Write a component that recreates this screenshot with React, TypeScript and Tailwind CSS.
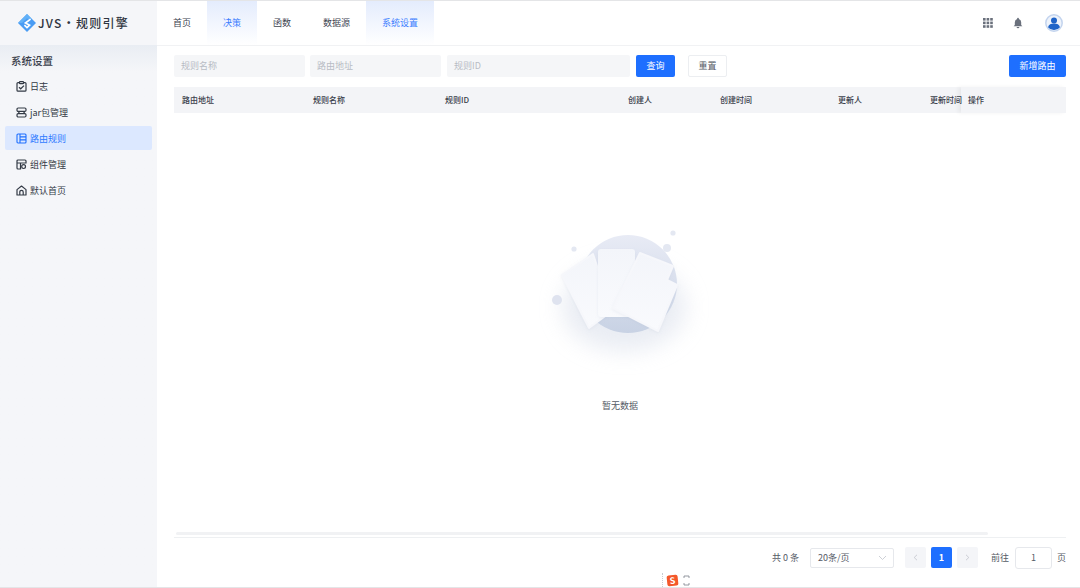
import React from "react";

const font = { fontFamily: '"Noto Sans CJK SC", "Noto Sans", sans-serif' };

const navItems = [
  { label: "首页", active: false },
  { label: "决策", active: true },
  { label: "函数", active: false },
  { label: "数据源", active: false },
  { label: "系统设置", active: true },
];

const LogIcon = () => (
  <svg width="11" height="11" viewBox="0 0 11 11" fill="none" stroke="#333a45" strokeWidth="1.2">
    <path d="M3.5 1.6H2a1 1 0 0 0-1 1v6.6a1 1 0 0 0 1 1h7a1 1 0 0 0 1-1V2.6a1 1 0 0 0-1-1H7.5" />
    <rect x="3.5" y="0.7" width="4" height="2" rx="0.6" />
    <path d="M3 6.2l1.7 1.6L8 4.6" />
  </svg>
);
const JarIcon = () => (
  <svg width="11" height="11" viewBox="0 0 11 11" fill="none" stroke="#333a45" strokeWidth="1.2">
    <rect x="1" y="1" width="9" height="3.4" rx="1.2" />
    <rect x="1" y="6.6" width="9" height="3.4" rx="1.2" />
    <path d="M3.4 4.4l-1 2.2M7.6 4.4l1 2.2" />
  </svg>
);
const RuleIcon = () => (
  <svg width="11" height="11" viewBox="0 0 11 11" fill="none" stroke="#1e6fff" strokeWidth="1.1">
    <rect x="1" y="1" width="9" height="9" rx="1" />
    <path d="M4 1v9M4 3.9h6M4 6.9h6" />
  </svg>
);
const CompIcon = () => (
  <svg width="11" height="11" viewBox="0 0 11 11" fill="none" stroke="#333a45" strokeWidth="1.2">
    <path d="M1 4V2a1 1 0 0 1 1-1h7a1 1 0 0 1 1 1v2H1zM1 4v5a1 1 0 0 0 1 1h2.5V4" />
    <circle cx="7.6" cy="7.6" r="1.9" />
  </svg>
);
const HomeIcon = () => (
  <svg width="11" height="11" viewBox="0 0 11 11" fill="none" stroke="#333a45" strokeWidth="1.2">
    <path d="M1 4.6L5.5 1 10 4.6V10H1V4.6z" strokeLinejoin="round" />
    <path d="M3.8 10V7a1.7 1.7 0 0 1 3.4 0v3" />
  </svg>
);

const menu = [
  { label: "日志", icon: <LogIcon />, active: false },
  { label: "jar包管理", icon: <JarIcon />, active: false },
  { label: "路由规则", icon: <RuleIcon />, active: true },
  { label: "组件管理", icon: <CompIcon />, active: false },
  { label: "默认首页", icon: <HomeIcon />, active: false },
];

const columns = [
  { label: "路由地址", w: "w-[131px]" },
  { label: "规则名称", w: "w-[132px]" },
  { label: "规则ID", w: "w-[183px]" },
  { label: "创建人", w: "w-[92px]" },
  { label: "创建时间", w: "w-[118px]" },
  { label: "更新人", w: "w-[92px]" },
  { label: "更新时间", w: "w-[39px]" },
];

const Logo = () => (
  <svg width="18" height="18" viewBox="0 0 18 18">
    <path d="M9 0L18 9L9 18L0 9Z" fill="#4a9cf4" />
    <path d="M9 0L0 9L4 9L9 4.2L11.5 6.6L13.4 4.4Z" fill="#62b1f8" />
    <path d="M12.6 5.2L7.4 9L11.6 11.2L9 13.6L6.4 11.2" fill="none" stroke="#fff" strokeWidth="1.6" />
  </svg>
);

const Illustration = () => (
  <svg width="140" height="125" viewBox="0 0 140 125" fill="none" className="overflow-visible">
    <defs>
      <linearGradient id="disc" x1="0" y1="0" x2="0" y2="1">
        <stop offset="0" stopColor="#e8ebf5" />
        <stop offset="1" stopColor="#c8d2e4" />
      </linearGradient>
      <linearGradient id="paper" x1="0" y1="0" x2="0" y2="1">
        <stop offset="0" stopColor="#f3f5fa" />
        <stop offset="1" stopColor="#f9fafd" />
      </linearGradient>
      <filter id="soft" x="-50%" y="-50%" width="200%" height="200%">
        <feGaussianBlur stdDeviation="11" />
      </filter>
      <filter id="pageShadow" x="-20%" y="-20%" width="140%" height="140%">
        <feDropShadow dx="0" dy="1" stdDeviation="1.5" floodColor="#aeb8cc" floodOpacity="0.18" />
      </filter>
    </defs>
    <ellipse cx="64" cy="72" rx="62" ry="44" fill="#d8deea" opacity="0.55" filter="url(#soft)" />
    <circle cx="68" cy="49" r="49" fill="url(#disc)" />
    <circle cx="-3" cy="65" r="5" fill="#dfe3ef" />
    <circle cx="14" cy="14" r="2.6" fill="#e4e8f2" />
    <circle cx="107" cy="13" r="4" fill="#e4e8f2" />
    <circle cx="113" cy="-2" r="2.6" fill="#e4e8f2" />
    <path
      d="M2 40L33 19L52 76L29 93Z"
      fill="url(#paper)"
      stroke="#f6f7fb"
      strokeWidth="2"
      strokeLinejoin="round"
      filter="url(#pageShadow)"
    />
    <rect x="38" y="14" width="37" height="68" rx="3" fill="url(#paper)" filter="url(#pageShadow)" />
    <path
      d="M80 18L113 31L107 45L117 50L98 96L53 73Z"
      fill="url(#paper)"
      stroke="#f6f7fb"
      strokeWidth="2"
      strokeLinejoin="round"
      filter="url(#pageShadow)"
    />
  </svg>
);

export default function App() {
  return (
    <div style={font} className="relative flex h-[588px] w-[1080px] flex-col overflow-hidden border-t border-b border-[#e4e5e7] bg-white text-[9px] text-[#333a45]">
      <div className="flex h-[44px] shrink-0">
        <div className="flex w-[157px] shrink-0 items-center bg-[#f5f6f9] pl-[18px]">
          <Logo />
          <span className="ml-[2px] whitespace-nowrap text-[12px] font-medium tracking-[1.25px] text-[#2f3540]">JVS·规则引擎</span>
        </div>
        <nav className="flex">
          {navItems.map((n) => (
            <div
              key={n.label}
              className={
                n.active
                  ? "flex items-center bg-gradient-to-b from-[#e4ecfd] to-white px-4 text-[#3b7dff]"
                  : "flex items-center px-4 text-[#3d4450]"
              }
            >
              {n.label}
            </div>
          ))}
        </nav>
        <div className="ml-auto flex items-center">
          <svg width="10" height="10" viewBox="0 0 10 10" fill="#6a707c" className="mr-[20px]">
            {[0, 3.6, 7.2].flatMap((y) =>
              [0, 3.6, 7.2].map((x) => <rect key={`${x}-${y}`} x={x} y={y} width="2.6" height="2.6" />),
            )}
          </svg>
          <svg width="10" height="12" viewBox="0 0 11 12" fill="#6a707c" className="mr-[22px]">
            <path d="M5.5 0.3a1 1 0 0 1 1 1v.4A3.6 3.6 0 0 1 9 5.2v3l1.3 1.3H.7L2 8.2v-3a3.6 3.6 0 0 1 2.5-3.5v-.4a1 1 0 0 1 1-1z" />
            <path d="M4 10.3h3a1.5 1.5 0 0 1-3 0z" />
          </svg>
          <svg width="18" height="18" viewBox="0 0 18 18" className="mr-[17px]">
            <circle cx="9" cy="9" r="8.2" fill="#eef3fb" stroke="#c3d4ee" strokeWidth="1.5" />
            <circle cx="9" cy="6.4" r="3" fill="#1e63c8" />
            <path d="M3 13.2c.7-2.6 3-3.6 6-3.6s5.3 1 6 3.6A7.4 7.4 0 0 1 9 16a7.4 7.4 0 0 1-6-2.8z" fill="#1e63c8" />
          </svg>
        </div>
      </div>

      <div className="flex min-h-0 flex-1">
        <aside className="w-[157px] shrink-0 bg-gradient-to-b from-[#e9edf3] from-0% via-[#f5f6f9] via-[5%] to-[#f5f6f9]">
          <div className="flex h-[29.4px] items-center pl-[11px] pt-[3px] text-[10.5px] font-medium text-[#3a404b]">系统设置</div>
          <div className="flex flex-col gap-[2px] pl-[5px] pr-[5px]">
            {menu.map((m) => (
              <div
                key={m.label}
                className={
                  m.active
                    ? "flex h-[24px] items-center gap-[3px] rounded-[2px] bg-[#dce8ff] pl-[11px] text-[#2f7bff]"
                    : "flex h-[24px] items-center gap-[3px] pl-[11px] text-[#333a45]"
                }
              >
                {m.icon}
                <span>{m.label}</span>
              </div>
            ))}
          </div>
        </aside>

        <main className="flex min-w-0 flex-1 flex-col border-t border-[#f1f2f4] pl-[17px] pr-[14px]">
          <div className="mt-[9px] flex h-[22px] shrink-0 items-stretch">
            <div className="flex w-[131px] items-center rounded-[2px] bg-[#f5f6f8] pl-[7px] text-[#b8bcc4]">规则名称</div>
            <div className="ml-[5px] flex w-[131px] items-center rounded-[2px] bg-[#f5f6f8] pl-[7px] text-[#b8bcc4]">路由地址</div>
            <div className="ml-[6px] flex w-[183px] items-center rounded-[2px] bg-[#f5f6f8] pl-[7px] text-[#b8bcc4]">规则ID</div>
            <button className="ml-[6px] w-[39px] rounded-[2px] bg-[#1e6fff] text-[9px] text-white">查询</button>
            <button className="ml-[13px] w-[39px] rounded-[2px] border border-[#eceef1] bg-white text-[9px] text-[#555b66]">重置</button>
            <button className="ml-auto w-[57px] rounded-[2px] bg-[#1e6fff] text-[9px] text-white">新增路由</button>
          </div>

          <div className="mt-[10px] flex h-[26px] shrink-0 items-center bg-[#f3f4f7] text-[8px] font-medium text-[#3a404b]">
            {columns.map((c) => (
              <div key={c.label} className={`${c.w} shrink-0 whitespace-nowrap pl-2`}>
                {c.label}
              </div>
            ))}
            <div className="flex h-full flex-1 items-center pl-[7px] shadow-[-3px_0_4px_rgba(0,0,0,0.05)]">操作</div>
          </div>

          <div className="flex flex-1 flex-col items-center">
            <div className="ml-[20px] mt-[122px]">
              <Illustration />
            </div>
            <div className="mt-[39px] text-[9px] text-[#555b66]">暂无数据</div>
          </div>

          <div className="ml-[2px] h-[3px] w-[812px] shrink-0 rounded-full bg-[#f1f2f4]" />
          <div className="mb-[8px] mt-[2px] flex h-[42px] shrink-0 items-center justify-end border-t border-[#eef0f2] pb-[2px] text-[#555b66]">
            <span>共 0 条</span>
            <div className="ml-[11px] flex h-[20px] w-[84px] items-center justify-between rounded-[2px] border border-[#e6e8ec] pl-[7px] pr-[6px]">
              <span>20条/页</span>
              <svg width="9" height="6" viewBox="0 0 9 6" fill="none" stroke="#c0c4cc" strokeWidth="0.8"><path d="M1 1l3.5 3.5L8 1" /></svg>
            </div>
            <div className="ml-[11px] flex h-[21px] w-[21px] items-center justify-center rounded-[2px] bg-[#f4f5f8]">
              <svg width="5" height="7" viewBox="0 0 5 7" fill="none" stroke="#c0c4cc" strokeWidth="0.8"><path d="M4 .8L1.2 3.5 4 6.2" /></svg>
            </div>
            <div className="ml-[5px] flex h-[21px] w-[21px] items-center justify-center rounded-[2px] bg-[#1e6fff] font-bold text-white">1</div>
            <div className="ml-[5px] flex h-[21px] w-[21px] items-center justify-center rounded-[2px] bg-[#f4f5f8]">
              <svg width="5" height="7" viewBox="0 0 5 7" fill="none" stroke="#c0c4cc" strokeWidth="0.8"><path d="M1 .8l2.8 2.7L1 6.2" /></svg>
            </div>
            <span className="ml-[13px]">前往</span>
            <div className="ml-[6px] flex h-[22px] w-[37px] items-center justify-center rounded-[3px] border border-[#e6e8ec]">1</div>
            <span className="ml-[5px]">页</span>
          </div>
        </main>
      </div>

      <div className="absolute bottom-0 left-[662px] flex h-[14px] items-center">
        <div className="h-[14px] border-l border-dotted border-[#c9ccd2]" />
        <div className="ml-[4px] flex h-[11px] w-[11px] -rotate-6 items-center justify-center rounded-[2px] bg-[#f4582a] text-[9px] font-bold leading-none text-white">S</div>
        <svg width="7" height="11" viewBox="0 0 7 11" fill="none" stroke="#7b818b" strokeWidth="0.8" className="ml-[5px]">
          <path d="M1 3V1h5v2M1 8v2h5V8" />
        </svg>
      </div>
    </div>
  );
}
